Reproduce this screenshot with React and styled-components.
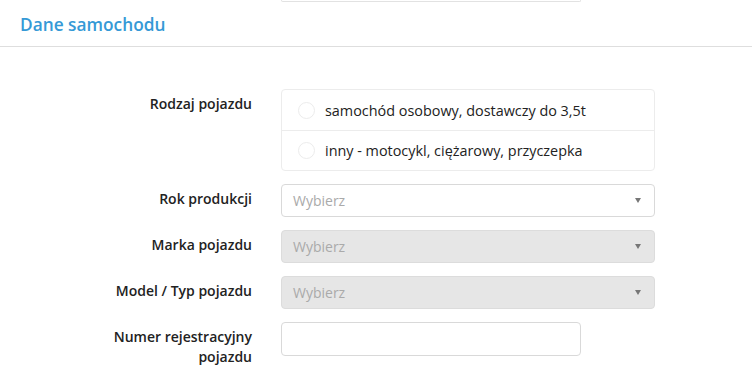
import React from "react";
import styled, { createGlobalStyle } from "styled-components";

const GlobalStyle = createGlobalStyle`
  body {
    margin: 0;
    background: #fff;
    font-family: "Open Sans", "DejaVu Sans", sans-serif;
    color: #222;
  }
`;

const Page = styled.div`
  width: 752px;
  height: 372px;
  overflow: hidden;
`;

// bottom edge of the field from the previous section
const PrevField = styled.div`
  margin-left: 281px;
  width: 298px;
  height: 1px;
  border: 1px solid #e2e2e2;
  border-top: none;
  border-radius: 0 0 4px 4px;
`;

const SectionHeader = styled.div`
  height: 44px;
  display: flex;
  align-items: center;
  padding-left: 20px;
  border-bottom: 1px solid #dedede;
`;

const SectionTitle = styled.h2`
  margin: 0;
  font-size: 17.3px;
  font-weight: 600;
  color: #3599d6;
`;

const Form = styled.div`
  display: grid;
  grid-template-columns: 252px 374px;
  column-gap: 29px;
  row-gap: 13px;
  padding-top: 42px;
`;

const Label = styled.label`
  text-align: right;
  font-size: 14px;
  font-weight: 600;
  line-height: 20px;
  padding-top: ${(p) => p.$top || 5}px;
  color: #222;
`;

const RadioGroup = styled.div`
  border: 1px solid #ececec;
  border-radius: 4px;
  display: flex;
  flex-direction: column;
`;

const RadioRow = styled.div`
  height: 40px;
  box-sizing: border-box;
  display: flex;
  align-items: center;
  gap: 10px;
  padding-left: 16px;
  font-size: 14.4px;
  color: #222;
  & + & {
    border-top: 1px solid #ececec;
  }
`;

const RadioCircle = styled.span`
  width: 17px;
  height: 17px;
  border: 1px solid #ececec;
  border-radius: 50%;
  box-sizing: border-box;
`;

const Select = styled.div`
  height: 33px;
  box-sizing: border-box;
  border: 1px solid ${(p) => (p.$disabled ? "#dcdcdc" : "#d9d9d9")};
  background: ${(p) => (p.$disabled ? "#e6e6e6" : "#fff")};
  border-radius: 4px;
  display: flex;
  align-items: center;
  justify-content: space-between;
  padding: 0 13px 0 11px;
  font-size: 14px;
  color: #aaa;
`;

const Arrow = styled.span`
  width: 0;
  height: 0;
  border-left: 3.5px solid transparent;
  border-right: 3.5px solid transparent;
  border-top: 5px solid #777;
`;

const TextInput = styled.input`
  width: 300px;
  height: 34px;
  box-sizing: border-box;
  border: 1px solid #d9d9d9;
  border-radius: 4px;
  font: inherit;
  outline: none;
`;

function SelectField({ disabled }) {
  return (
    <Select $disabled={disabled}>
      <span>Wybierz</span>
      <Arrow />
    </Select>
  );
}

export default function App() {
  return (
    <Page>
      <GlobalStyle />
      <PrevField />
      <SectionHeader>
        <SectionTitle>Dane samochodu</SectionTitle>
      </SectionHeader>
      <Form>
        <Label>Rodzaj pojazdu</Label>
        <RadioGroup>
          <RadioRow>
            <RadioCircle />
            samochód osobowy, dostawczy do 3,5t
          </RadioRow>
          <RadioRow>
            <RadioCircle />
            inny - motocykl, ciężarowy, przyczepka
          </RadioRow>
        </RadioGroup>

        <Label>Rok produkcji</Label>
        <SelectField />

        <Label>Marka pojazdu</Label>
        <SelectField disabled />

        <Label>Model / Typ pojazdu</Label>
        <SelectField disabled />

        <Label $top={5}>
          Numer rejestracyjny
          <br />
          pojazdu
        </Label>
        <div>
          <TextInput />
        </div>
      </Form>
    </Page>
  );
}
